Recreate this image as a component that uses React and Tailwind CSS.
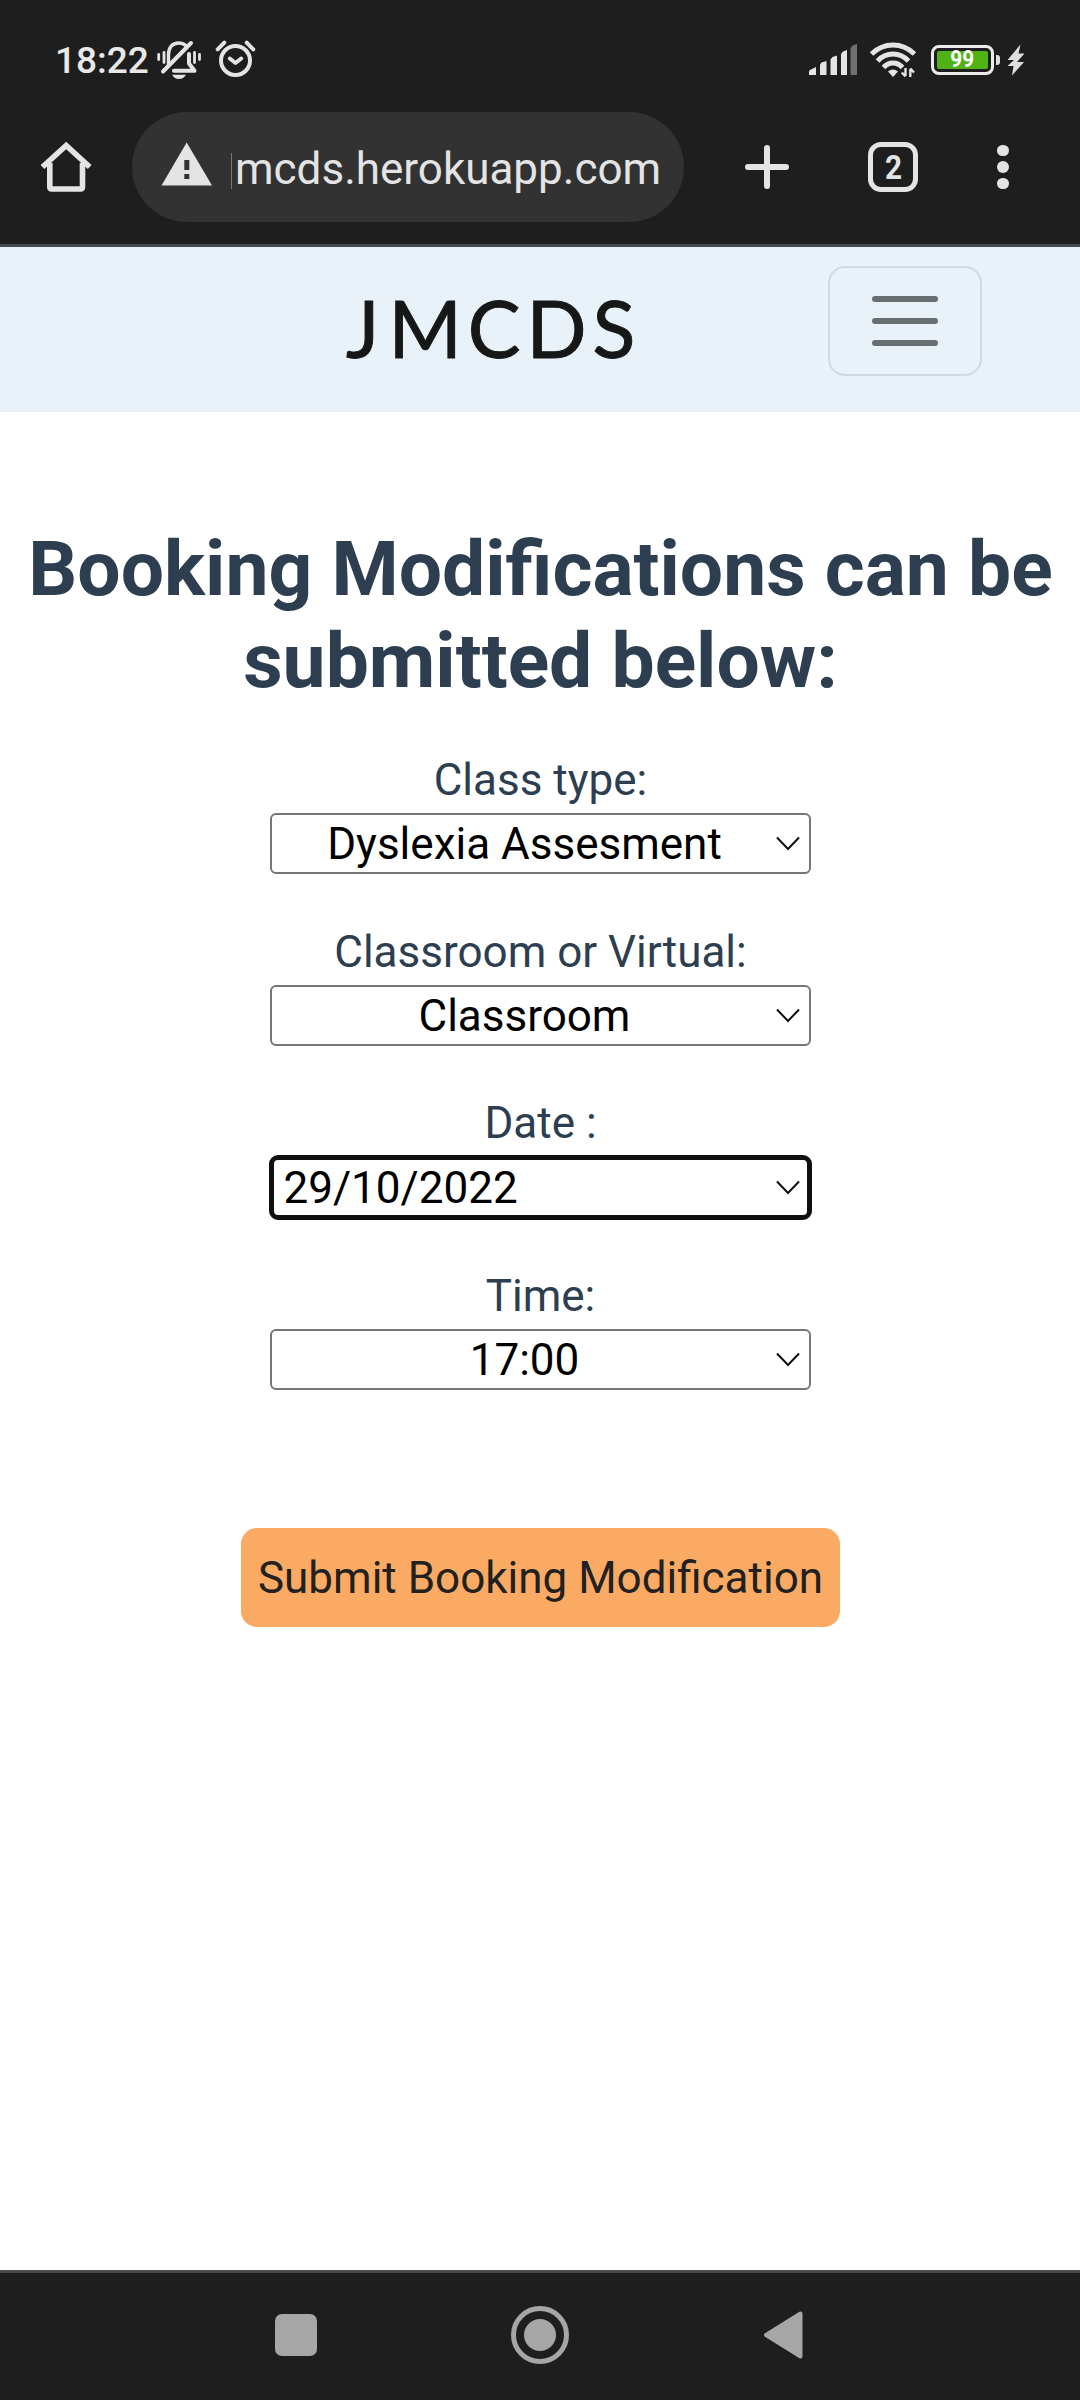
const ink = "#e4e4e4";

function BellOff() {
  return (
    <svg className="ml-[9px] shrink-0" width="46" height="42" viewBox="156 39 46 42" fill="none" stroke={ink} strokeLinecap="round">
      <path d="M168.500 65V54.500C168.500 47.500 172.500 43 178.500 43C181.500 43 184 44 186 45.800" strokeWidth="3.400" />
      <path d="M191 43L163 71.500" strokeWidth="4" />
      <path d="M189 54V63.500L194.500 70.800H174" strokeWidth="4" strokeLinejoin="round" />
      <path d="M172 74.800H186C184.500 77.600 182 79 179 79S173.500 77.600 172 74.800Z" fill={ink} stroke="none" />
      <path d="M158.700 54.500V59.500M164 52.500V62.500M194.500 52.500V62.500M199.500 54.500V59.500" strokeWidth="2.800" />
    </svg>
  );
}

function Alarm() {
  return (
    <svg className="ml-[12px] shrink-0" width="44" height="42" viewBox="214 39 44 42" fill="none" stroke={ink}>
      <circle cx="235.500" cy="60.500" r="14.500" strokeWidth="4" />
      <path d="M229.800 58.500L235.500 63L241.200 58.500" strokeWidth="4" strokeLinecap="round" strokeLinejoin="round" />
      <path d="M217.700 49.300L224.300 42.600M253.300 49.300L246.700 42.600" strokeWidth="4" strokeLinecap="round" />
    </svg>
  );
}

function Signal() {
  return (
    <svg className="shrink-0" width="50" height="34" viewBox="808 43 50 34" fill={ink}>
      <path d="M809 75V71.500Q809 70.500 810 70L816 67V75Z" />
      <path d="M820 75V64.500L821.500 62.500L826.500 61V75Z" />
      <path d="M830.500 75V59.500L832.500 57L837 55.500V75Z" />
      <path d="M841 75V54L843 51.500L847 50V75Z" />
      <path d="M850.500 75V48L852.500 45.500L857 44V75Z" fill="#6f6f6f" />
    </svg>
  );
}

function Wifi() {
  return (
    <svg className="ml-[11px] shrink-0" width="48" height="40" viewBox="869 40 48 40" fill="none" stroke={ink}>
      <path d="M871.500 54Q881 45 893 45T914.500 54" strokeWidth="5" />
      <path d="M877.500 61Q884 54 893 54T908.500 61" strokeWidth="5" />
      <path d="M883.500 67.500Q887.500 63 893 63T902.500 67.500" strokeWidth="5" />
      <path d="M888 71.500Q893 67.500 898 71.500L893 77Z" fill={ink} stroke="none" />
      <path d="M905.500 68V76M901.800 72.500L905.500 76.500M910.300 77V69M914 72.500L910.300 68.500" strokeWidth="2.400" />
    </svg>
  );
}

function Battery() {
  return (
    <div className="ml-[14px] flex shrink-0 items-center">
      <div className="flex h-[30px] w-[63px] rounded-[8px] border-[3px] border-[#ececec] p-[3px]">
        <div className="flex flex-1 items-center justify-center rounded-[2px] bg-[#4fb215] text-[23px] leading-none font-bold text-white">
          <span className="scale-x-90">99</span>
        </div>
      </div>
      <div className="ml-[2px] h-[10px] w-[4px] rounded-r-[3px] bg-[#dedede]" />
      <svg className="ml-[7px]" width="18" height="32" viewBox="1007 43 18 32" fill="#dedede">
        <path d="M1020.500 43.500L1007.500 59H1014L1007.500 65H1013.500L1012 74.500L1024 61H1017L1024.500 52.500H1018.500Z" />
      </svg>
    </div>
  );
}

function StatusBar() {
  return (
    <div className="flex h-[112px] items-center pt-[7px] pr-[55px] pl-[55px]">
      <span className="mt-[2px] w-[92px] text-[37px] leading-[44px] font-medium whitespace-nowrap text-[#e8e8e8]">18:22</span>
      <BellOff />
      <Alarm />
      <div className="flex-1" />
      <Signal />
      <Wifi />
      <Battery />
    </div>
  );
}

function Toolbar() {
  return (
    <div className="flex h-[110px] items-center">
      <svg className="ml-[40px]" width="52" height="52" viewBox="40 141 52 52" fill="none" stroke={ink} strokeWidth="5.600">
        <path d="M49.800 163V187Q49.800 189 51.800 189H80.500Q82.500 189 82.500 187V163" />
        <path d="M42.500 167L66.200 145.500L89.700 167" strokeLinejoin="miter" />
      </svg>
      <div className="ml-[40px] flex h-[110px] w-[552px] items-center rounded-full bg-[#323232]">
        <svg className="ml-[29px] -mt-[6px]" width="52" height="44" viewBox="161 142 52 44">
          <path d="M186.700 142.500L212 185.500H161.500Z" fill={ink} />
          <path d="M184.300 160H189.300V170H184.300ZM184.300 174H189.300V179H184.300Z" fill="#323232" />
        </svg>
        <div className="mt-[8px] ml-[18px] h-[36px] w-px bg-[#777]" />
        <span className="mt-[3px] ml-[3px] text-[44px] leading-[52px] whitespace-nowrap text-[#e4e4e4]">mcds.herokuapp.com</span>
      </div>
      <svg className="ml-[60px]" width="46" height="46" viewBox="0 0 46 46" stroke={ink} strokeWidth="6" strokeLinecap="round">
        <path d="M23 4V42M4 23H42" />
      </svg>
      <div className="ml-[78px] flex h-[50px] w-[50px] items-center justify-center rounded-[13px] border-[5.500px] border-[#e4e4e4] text-[33px] leading-none font-bold text-[#e4e4e4]">
        <span className="scale-x-90">2</span>
      </div>
      <div className="ml-[79px] flex flex-col gap-[5px]">
        <i className="size-[11.500px] rounded-full bg-[#e4e4e4]" />
        <i className="size-[11.500px] rounded-full bg-[#e4e4e4]" />
        <i className="size-[11.500px] rounded-full bg-[#e4e4e4]" />
      </div>
    </div>
  );
}

function Chevron() {
  return (
    <svg width="24" height="16" viewBox="0 0 24 16" fill="none" stroke="#111" strokeWidth="2">
      <path d="M1 1.500L12 13L23 1.500" />
    </svg>
  );
}

function Field({ label, value, className, focused }) {
  return (
    <div className={`flex flex-col items-center ${className}`}>
      <label className="h-[34px] pl-[1px] text-[44px] leading-[34px] whitespace-nowrap text-[#2c3e50]">{label}</label>
      {focused ? (
        <div className="mt-[15px] flex h-[65px] w-[543px] items-center rounded-[9px] border-[5px] border-[#101010] pr-[7px] pl-[10px]">
          <span className="flex-1 text-[44px] leading-[52px] text-black">{value}</span>
          <Chevron />
        </div>
      ) : (
        <div className="mt-[16px] flex h-[61px] w-[541px] items-center rounded-[6px] border-2 border-[#767676] pr-[9px] pl-[2px]">
          <span className="flex-1 text-center text-[44px] leading-[52px] text-black">{value}</span>
          <Chevron />
        </div>
      )}
    </div>
  );
}

export default function App() {
  return (
    <div className="flex h-[2400px] w-[1080px] flex-col overflow-hidden bg-white font-['Roboto',sans-serif]">
      <header className="h-[247px] shrink-0 border-b-[3px] border-[#454b4b] bg-[#1e1e1e]">
        <StatusBar />
        <Toolbar />
      </header>

      <nav className="flex h-[165px] shrink-0 items-start bg-[#e9f2f8]">
        <span className="mt-[33px] ml-[346px] w-[290px] font-['Lato',sans-serif] text-[79px] leading-[96px] tracking-[6px] whitespace-nowrap text-[#161818] [-webkit-text-stroke:1px_#161818]">
          <span className="tracking-[9px]">J</span>MCDS
        </span>
        <button className="mt-[19px] ml-[192px] flex h-[110px] w-[154px] flex-col items-center justify-center gap-[16px] rounded-[17px] border-2 border-[#d2d9e0]">
          <i className="h-[6px] w-[66px] rounded-full bg-[#696e71]" />
          <i className="h-[6px] w-[66px] rounded-full bg-[#696e71]" />
          <i className="h-[6px] w-[66px] rounded-full bg-[#696e71]" />
        </button>
      </nav>

      <main className="flex flex-1 flex-col items-center">
        <h1 className="mt-[111px] pl-[1px] text-center text-[76.800px] leading-[92px] font-bold whitespace-nowrap text-[#2c3e50]">
          Booking Modifications can be
          <br />
          submitted below:
        </h1>
        <Field className="mt-[56px]" label="Class type:" value="Dyslexia Assesment" />
        <Field className="mt-[61px]" label="Classroom or Virtual:" value="Classroom" />
        <Field className="mt-[60px]" label="Date :" value="29/10/2022" focused />
        <Field className="mt-[59px]" label="Time:" value="17:00" />
        <button className="mt-[138px] flex h-[99px] w-[599px] items-center justify-center rounded-[16px] bg-[#fbaa63] pl-[1px] text-[44px] leading-[52px] whitespace-nowrap text-[#212121]">
          Submit Booking Modification
        </button>
      </main>

      <footer className="flex h-[130px] shrink-0 items-center border-t-[3px] border-[#454b4b] bg-[#1e1e1e] pb-[3px]">
        <div className="ml-[275px] size-[42px] rounded-[7px] bg-[#a6a6a6]" />
        <div className="ml-[194px] flex size-[58px] items-center justify-center rounded-full border-[5px] border-[#a6a6a6]">
          <i className="size-[32px] rounded-full bg-[#a6a6a6]" />
        </div>
        <svg className="ml-[193px]" width="42" height="50" viewBox="0 0 42 50" fill="#a6a6a6" stroke="#a6a6a6" strokeWidth="4" strokeLinejoin="round">
          <path d="M4 25L38.500 3.500V46.500Z" />
        </svg>
      </footer>
    </div>
  );
}
